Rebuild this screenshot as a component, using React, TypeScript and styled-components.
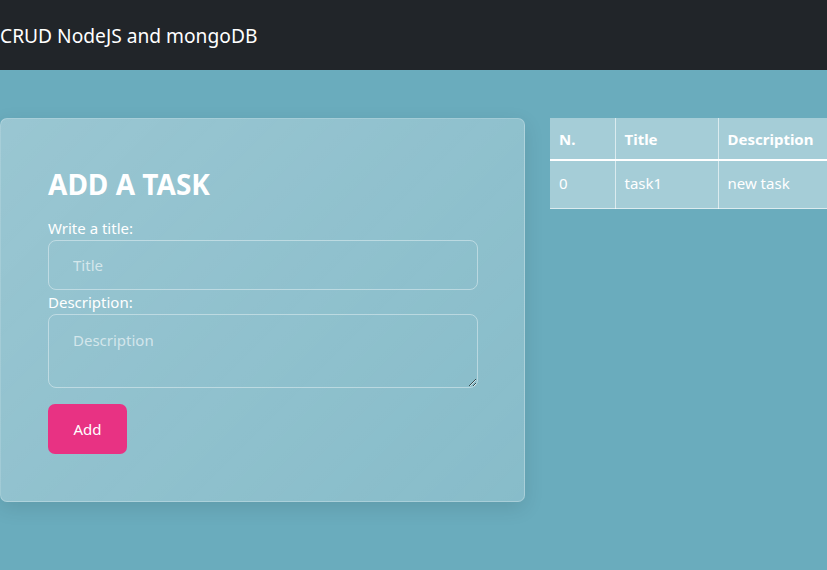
import React from "react";
import styled, { createGlobalStyle } from "styled-components";

const Global = createGlobalStyle`
  html, body { margin: 0; padding: 0; }
  body {
    background: #6aacbd;
    font-family: "Noto Sans", "Open Sans", sans-serif;
    color: #fff;
    min-height: 570px;
    overflow: hidden;
  }
  * { box-sizing: border-box; }
`;

const Nav = styled.nav`
  height: 70px;
  background: #212529;
  display: flex;
  align-items: center;
`;

const Brand = styled.div`
  font-size: 19.2px;
  color: #fff;
`;

const Main = styled.main`
  display: flex;
  align-items: flex-start;
  gap: 25px;
  padding-top: 48px;
`;

const Card = styled.section`
  width: 525px;
  flex: none;
  height: 384px;
  padding: 48px 47px 0 47px;
  border-radius: 7px;
  background: linear-gradient(135deg, rgba(255,255,255,0.32), rgba(255,255,255,0.2));
  border: 1px solid rgba(255,255,255,0.22);
  box-shadow: 0 6px 20px rgba(0,0,0,0.1);
`;

const Heading = styled.h2`
  margin: 0 0 17px 0;
  font-size: 28px;
  font-weight: 700;
  line-height: 34px;
`;

const Label = styled.label`
  display: block;
  font-size: 15px;
  line-height: 20px;
  margin-bottom: 2px;
`;

const fieldStyles = `
  width: 430px;
  display: block;
  background: transparent;
  border: 1px solid rgba(255,255,255,0.4);
  border-radius: 8px;
  color: #fff;
  font-family: "Noto Sans", "Open Sans", sans-serif;
  font-size: 15px;
  padding: 0 24px;
  outline: none;
  &::placeholder { color: rgba(255,255,255,0.6); }
`;

const Input = styled.input`
  ${fieldStyles}
  height: 50px;
  margin-bottom: 2px;
`;

const TextArea = styled.textarea`
  ${fieldStyles}
  height: 74px;
  padding-top: 15px;
  resize: vertical;
`;

const Button = styled.button`
  margin-top: 16px;
  width: 79px;
  height: 50px;
  border: none;
  border-radius: 7px;
  background: #e83283;
  color: #fff;
  font-family: "Noto Sans", "Open Sans", sans-serif;
  font-size: 15px;
`;

const Table = styled.table`
  flex: none;
  border-collapse: collapse;
  background: rgba(255,255,255,0.4);
  font-size: 15px;
  white-space: nowrap;
`;

const Th = styled.th<{ $w: number }>`
  width: ${(p) => p.$w}px;
  height: 42px;
  text-align: left;
  padding: 0 9px;
  font-weight: 700;
  border-right: 1px solid rgba(255,255,255,0.6);
  border-bottom: 2px solid #fff;
`;

const Td = styled.td`
  height: 48px;
  padding: 0 9px 3px 9px;
  border-right: 1px solid rgba(255,255,255,0.6);
  border-bottom: 1px solid rgba(255,255,255,0.6);
`;

export default function App() {
  return (
    <>
      <Global />
      <Nav>
        <Brand>CRUD NodeJS and mongoDB</Brand>
      </Nav>
      <Main>
        <Card>
          <Heading>ADD A TASK</Heading>
          <Label>Write a title:</Label>
          <Input placeholder="Title" />
          <Label>Description:</Label>
          <TextArea placeholder="Description" />
          <Button>Add</Button>
        </Card>
        <Table>
          <thead>
            <tr>
              <Th $w={65}>N.</Th>
              <Th $w={103}>Title</Th>
              <Th $w={120}>Description</Th>
            </tr>
          </thead>
          <tbody>
            <tr>
              <Td>0</Td>
              <Td>task1</Td>
              <Td>new task</Td>
            </tr>
          </tbody>
        </Table>
      </Main>
    </>
  );
}
